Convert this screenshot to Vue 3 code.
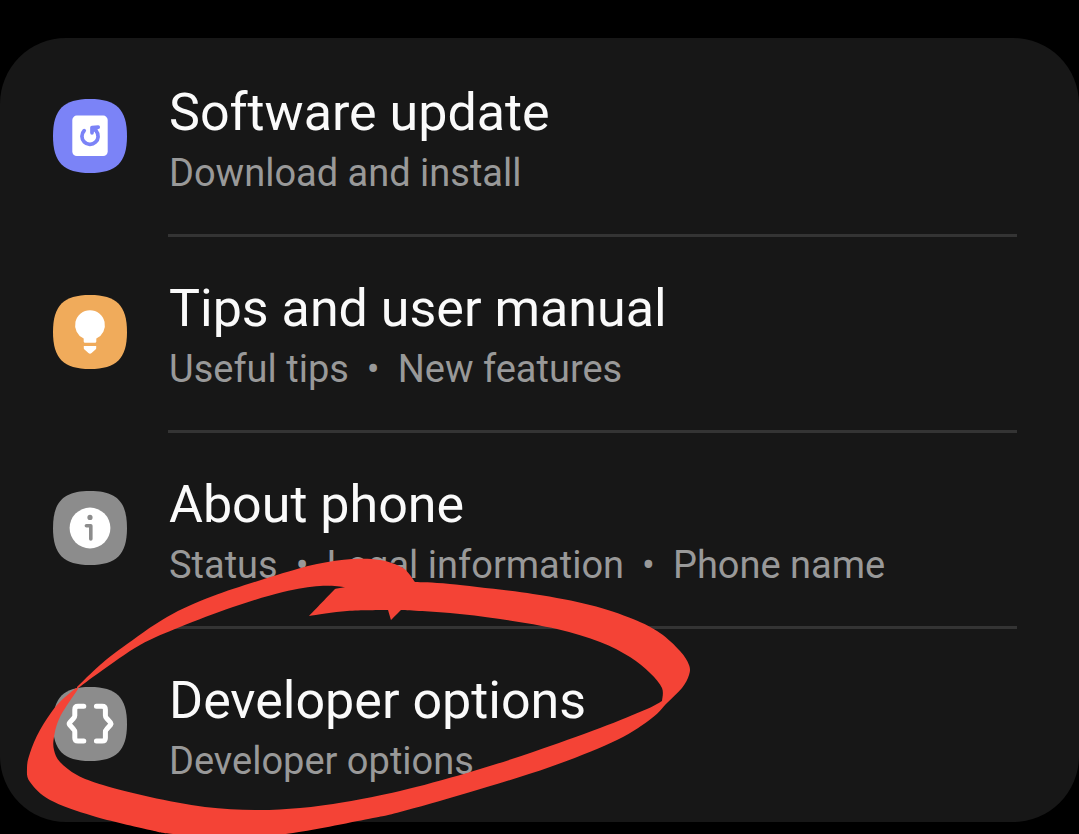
<script setup>
const items = [
  { id: 'update', title: 'Software update', details: ['Download and install'] },
  { id: 'tips', title: 'Tips and user manual', details: ['Useful tips', 'New features'] },
  { id: 'about', title: 'About phone', details: ['Status', 'Legal information', 'Phone name'] },
  { id: 'developer', title: 'Developer options', details: ['Developer options'] },
]

// Each run is a smooth curve; runs meet at sharp corners.
const strokeRuns = [
  [[77, 687], [100, 665], [123, 647], [167, 617], [213, 596], [277, 575], [317, 564], [352, 559], [380, 560], [403, 568], [415, 582]],
  [[415, 582], [450, 584], [533, 594], [590, 605], [633, 619], [660, 633], [680, 651], [689, 665], [689, 675], [682, 688], [667, 703], [652, 718], [617, 740], [550, 767], [467, 793], [400, 812], [373, 818], [293, 833], [235, 838], [173, 834], [150, 830], [93, 816], [50, 800], [30, 782], [27, 768], [30, 753], [40, 730], [57, 705], [76, 688]],
  [[76, 688], [78, 689]],
  [[78, 689], [60, 717], [54, 737], [54, 750], [60, 762], [77, 775], [103, 785], [150, 797], [205, 807], [255, 810], [300, 808], [345, 802], [400, 791], [467, 773], [533, 752], [600, 728], [647, 709], [662, 701]],
  [[662, 701], [662, 688], [650, 673], [630, 657], [600, 642], [557, 629], [500, 619], [450, 613], [401, 610]],
  [[401, 610], [391, 620]],
  [[391, 620], [388, 610]],
  [[388, 610], [347, 611], [309, 616]],
  [[309, 616], [335, 589]],
  [[335, 589], [345, 587]],
  [[345, 587], [320, 586], [283, 592], [233, 607], [180, 627], [140, 645], [100, 672], [77, 689]],
]

function smooth(points) {
  let d = ''
  for (let i = 0; i < points.length - 1; i++) {
    const a = points[i - 1] ?? points[i]
    const b = points[i]
    const c = points[i + 1]
    const e = points[i + 2] ?? c
    d += `C${b[0] + (c[0] - a[0]) / 6} ${b[1] + (c[1] - a[1]) / 6} ${c[0] - (e[0] - b[0]) / 6} ${c[1] - (e[1] - b[1]) / 6} ${c[0]} ${c[1]}`
  }
  return d
}

const strokePath = `M77 687${strokeRuns.map(smooth).join('')}Z`
</script>

<template>
  <main class="page">
    <nav class="card" aria-label="Settings">
      <a v-for="item in items" :key="item.id" class="row" :href="`#${item.id}`">
        <svg class="icon" :class="item.id" viewBox="0 0 74 74" aria-hidden="true">
          <path class="tile" d="M37 0C63.5 0 74 10.5 74 37S63.5 74 37 74 0 63.5 0 37 10.5 0 37 0Z" />
          <template v-if="item.id === 'update'">
            <rect class="solid" x="19.3" y="16.6" width="35.4" height="40.4" rx="4.5" />
            <path class="arrow" d="M31.2 31.6A8.1 8.1 0 1 0 43.2 32" />
            <path class="arrow" d="M39 33.8V28.6L45.2 28.2" />
            <path class="head" d="M38 28L45.8 27.6 43.6 32.4 39.3 33Z" />
          </template>
          <template v-else-if="item.id === 'tips'">
            <path class="solid" d="M37 15.2a14.9 14.9 0 0 1 6.3 28.4V46.4q0 1.3-1.3 1.3H32q-1.3 0-1.3-1.3V43.6A14.9 14.9 0 0 1 37 15.2Z" />
            <path class="solid" d="M30.8 51H43.2V53.2q0 .9-.7 1.4L38.6 58.1q-1.6 1.3-3.2 0L31.5 54.6q-.7-.5-.7-1.4Z" />
          </template>
          <template v-else-if="item.id === 'about'">
            <circle class="solid" cx="37" cy="37" r="20.4" />
            <circle class="tile" cx="37" cy="26.4" r="2.6" />
            <path class="info" d="M33.4 34.7H37.8V48" />
          </template>
          <template v-else>
            <path class="brace" d="M30.8 19.3H25Q21.8 19.3 21.8 22.5V28.5Q21.8 30 20.6 31.2L16.6 35.6Q15.8 36.7 16.6 37.8L20.6 42.2Q21.8 43.4 21.8 44.9V51Q21.8 54.1 25 54.1H30.8" />
            <path class="brace" d="M43.4 19.3H49.2Q52.4 19.3 52.4 22.5V28.5Q52.4 30 53.6 31.2L57.6 35.6Q58.4 36.7 57.6 37.8L53.6 42.2Q52.4 43.4 52.4 44.9V51Q52.4 54.1 49.2 54.1H43.4" />
          </template>
        </svg>
        <span class="text">
          <span class="title">{{ item.title }}</span>
          <span class="details">
            <template v-for="(detail, index) in item.details" :key="detail">
              <span v-if="index">•</span>
              <span>{{ detail }}</span>
            </template>
          </span>
        </span>
      </a>
    </nav>
    <svg class="marker" viewBox="0 0 1079 834" aria-hidden="true">
      <path :d="strokePath" />
    </svg>
  </main>
</template>

<style>
body {
  margin: 0;
  background: #000;
}
</style>

<style scoped>
.page {
  position: relative;
  box-sizing: border-box;
  min-height: 100vh;
  padding: 38px 0 12px;
  overflow: hidden;
  background: #000;
  font-family: Roboto, "Noto Sans", sans-serif;
}

.card {
  overflow: hidden;
  border-radius: 66px;
  background: #171717;
}

.row {
  position: relative;
  display: flex;
  align-items: center;
  gap: 42px;
  padding: 39px 62px 39px 53px;
  color: #fafafa;
  text-decoration: none;
}

.row + .row::before {
  content: "";
  position: absolute;
  top: 0;
  left: 168px;
  right: 62px;
  height: 3px;
  background: #343434;
}

.icon {
  flex: none;
  width: 74px;
  height: 74px;
}

.text {
  display: flex;
  flex: 1;
  flex-direction: column;
  gap: 8px;
  padding-top: 6px;
}

.title {
  font-size: 52px;
  line-height: 60px;
}

.details {
  display: flex;
  flex-wrap: wrap;
  column-gap: 18px;
  color: #999;
  font-size: 38px;
  line-height: 44px;
}

.tile {
  fill: #8c8c8c;
}

.update .tile {
  fill: #7b83f7;
}

.tips .tile {
  fill: #f0ab5b;
}

.solid {
  fill: #fff;
}

.arrow,
.info,
.brace {
  fill: none;
  stroke-linecap: round;
  stroke-linejoin: round;
}

.arrow {
  stroke: #7b83f7;
  stroke-width: 3.7;
}

.head {
  fill: #7b83f7;
}

.info {
  stroke: #8c8c8c;
  stroke-width: 3.6;
}

.brace {
  stroke: #fff;
  stroke-width: 5;
}

.marker {
  position: absolute;
  top: 0;
  left: 0;
  width: 100%;
  pointer-events: none;
  fill: #f44336;
}
</style>
